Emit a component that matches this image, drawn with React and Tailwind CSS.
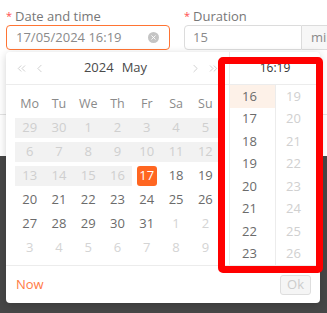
import React from "react";
import { ChevronLeft, ChevronRight, ChevronsLeft, ChevronsRight, X } from "lucide-react";

const weekDays = ["Mo", "Tu", "We", "Th", "Fr", "Sa", "Su"];

// kind: out = other month, past = before today (shaded), sel = selected, cur = normal
const weeks = [
  [[29, "past"], [30, "past"], [1, "past"], [2, "past"], [3, "past"], [4, "past"], [5, "past"]],
  [[6, "past"], [7, "past"], [8, "past"], [9, "past"], [10, "past"], [11, "past"], [12, "past"]],
  [[13, "past"], [14, "past"], [15, "past"], [16, "past"], [17, "sel"], [18, "cur"], [19, "cur"]],
  [[20, "cur"], [21, "cur"], [22, "cur"], [23, "cur"], [24, "cur"], [25, "cur"], [26, "cur"]],
  [[27, "cur"], [28, "cur"], [29, "cur"], [30, "cur"], [31, "cur"], [1, "out"], [2, "out"]],
  [[3, "out"], [4, "out"], [5, "out"], [6, "out"], [7, "out"], [8, "out"], [9, "out"]],
];

const hours = [16, 17, 18, 19, 20, 21, 22, 23];
const minutes = [19, 20, 21, 22, 23, 24, 25, 26];

function DayCell({ day, kind }) {
  if (kind === "sel") {
    return (
      <div className="flex items-center justify-center h-6">
        <div className="w-5 h-5 rounded-[3px] bg-[#ff6621] text-white flex items-center justify-center">
          {day}
        </div>
      </div>
    );
  }
  return (
    <div className="flex items-center h-6">
      <div
        className={
          "w-full h-5 flex items-center justify-center " +
          (kind === "past" ? "bg-[#f2f2f2] text-[#cfcfcf]" : kind === "out" ? "text-[#d4d4d4]" : "text-[#6b6b6b]")
        }
      >
        {day}
      </div>
    </div>
  );
}

export default function App() {
  return (
    <div className="relative w-[327px] h-[313px] overflow-hidden bg-white font-['Open_Sans',sans-serif] text-[13px]">
      <div className="h-[156px] flex flex-col">
        <div className="flex pt-[7px] pl-[6px] gap-[14px]">
          <div className="w-[164px] shrink-0">
            <div className="h-[18px] flex items-start text-[#777]">
              <span className="text-[#ff4d4f] text-[11px] leading-none mt-[3px] mr-[3px]">*</span>
              <span className="leading-[18px]">Date and time</span>
            </div>
            <div className="h-[25px] border border-[#ff7433] rounded-[4px] flex items-center pl-[9px] pr-[10px] text-[#8a8a8a]">
              <span className="flex-1">17/05/2024 16:19</span>
              <span className="w-[11px] h-[11px] rounded-full bg-[#c4c4c4] flex items-center justify-center">
                <X size={7} strokeWidth={3} color="#fff" />
              </span>
            </div>
          </div>
          <div className="w-[170px] shrink-0">
            <div className="h-[18px] flex items-start text-[#777]">
              <span className="text-[#ff4d4f] text-[11px] leading-none mt-[3px] mr-[3px]">*</span>
              <span className="leading-[18px]">Duration</span>
            </div>
            <div className="h-[25px] flex">
              <div className="w-[118px] shrink-0 border border-[#dcdcdc] rounded-l-[4px] flex items-center pl-[8px] text-[#8a8a8a]">
                15
              </div>
              <div className="flex-1 border border-l-0 border-[#dcdcdc] bg-[#f7f7f7] flex items-center pl-[9px] text-[#8a8a8a]">
                min
              </div>
            </div>
          </div>
        </div>
        <div className="h-[65px] border-b border-[#e3e3e3]" />
      </div>
      <div className="h-[157px] bg-[#474747]" />

      {/* picker popup */}
      <div className="absolute left-[6px] top-[52px] w-[314px] bg-white rounded-[4px] shadow-[0_2px_8px_rgba(0,0,0,0.18)] flex flex-col">
        <div className="flex">
          <div className="w-[224px] border-r border-[#ececec]">
            <div className="h-[33px] border-b border-[#ececec] flex items-center px-[9px] text-[#bdbdbd]">
              <ChevronsLeft size={13} strokeWidth={1.3} />
              <ChevronLeft size={13} strokeWidth={1.3} className="ml-[5px]" />
              <div className="flex-1 text-center text-[#4a4a4a] font-medium pr-[4px]">
                2024<span className="ml-[8px]">May</span>
              </div>
              <ChevronRight size={13} strokeWidth={1.3} className="mr-[5px]" />
              <ChevronsRight size={13} strokeWidth={1.3} />
            </div>
            <div className="px-[9px] pt-[8px] pb-[5px]">
              <div className="grid grid-cols-7 h-[23px] items-center text-[#8a8a8a] text-[12.5px]">
                {weekDays.map((d) => (
                  <div key={d} className="text-center">{d}</div>
                ))}
              </div>
              {weeks.map((w, i) => (
                <div key={i} className="grid grid-cols-7">
                  {w.map(([day, kind], j) => (
                    <DayCell key={j} day={day} kind={kind} />
                  ))}
                </div>
              ))}
            </div>
          </div>
          <div className="flex-1 flex flex-col">
            <div className="h-[33px] border-b border-[#ececec] flex items-center justify-center text-[#333] text-[12px] font-medium">
              16:19
            </div>
            <div className="flex flex-1">
              <div className="w-[46px] border-r border-[#ececec] text-[#6b6b6b]">
                {hours.map((h, i) => (
                  <div key={h} className={"h-[22.5px] flex items-center pl-[12px] " + (i === 0 ? "bg-[#fdf1e8]" : "")}>
                    {h}
                  </div>
                ))}
              </div>
              <div className="flex-1 text-[#d0d0d0]">
                {minutes.map((m) => (
                  <div key={m} className="h-[22.5px] flex items-center pl-[10px]">{m}</div>
                ))}
              </div>
            </div>
          </div>
        </div>
        <div className="h-[38px] border-t border-[#ececec] flex items-center justify-between pl-[10px] pr-[9px]">
          <span className="text-[#ff7a45]">Now</span>
          <span className="h-[20px] px-[6px] border border-[#dedede] bg-[#f5f5f5] rounded-[3px] text-[#cccccc] flex items-center">Ok</span>
        </div>
      </div>

      {/* highlight frame */}
      <div className="absolute left-[218px] top-[57px] w-[105px] h-[216px] border-[7px] border-[#ff0000] rounded-[5px]" />
    </div>
  );
}
